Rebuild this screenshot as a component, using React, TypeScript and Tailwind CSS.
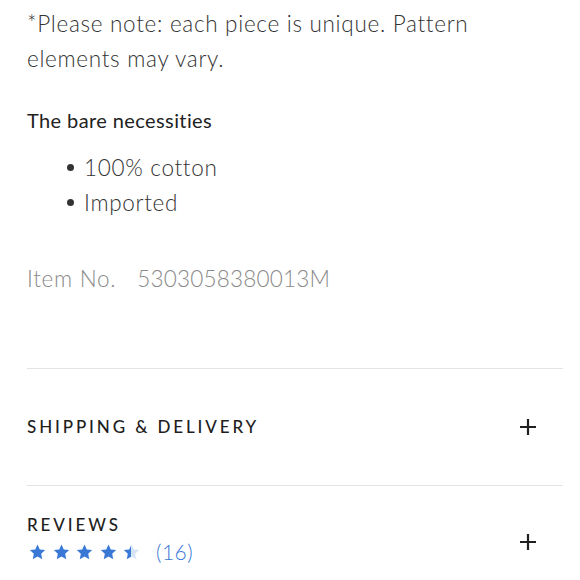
import React from 'react';

const Star: React.FC<{ fill?: number }> = ({ fill = 1 }) => {
  const id = `half-${fill}`;
  return (
    <svg width="17" height="16" viewBox="0 0 24 23" className="shrink-0">
      <defs>
        <linearGradient id={id} x1="0" x2="1" y1="0" y2="0">
          <stop offset={fill} stopColor="#3a78d6" />
          <stop offset={fill} stopColor="#d6e4f7" />
        </linearGradient>
      </defs>
      <path
        d="M12 0.8l3.3 7.1 7.7 0.9-5.7 5.3 1.5 7.7L12 17.9l-6.8 3.9 1.5-7.7L1 8.8l7.7-0.9z"
        fill={`url(#${id})`}
      />
    </svg>
  );
};

const Plus: React.FC = () => (
  <svg width="18" height="18" viewBox="0 0 18 18" className="shrink-0">
    <path d="M9 1v16M1 9h16" stroke="#1f1f1f" strokeWidth="2.2" />
  </svg>
);

export default function App() {
  return (
    <div className="w-[580px] h-[580px] overflow-hidden bg-white pl-[27px] pr-[17px] pt-[6px] font-['Lato',sans-serif] text-[#333]">
      <p className="text-[22.5px] leading-[35px] tracking-[0.7px] font-light text-[#333]">
        *Please note: each piece is unique. Pattern elements may vary.
      </p>

      <h3 className="mt-[30px] text-[20px] leading-[28px] tracking-[0.4px] text-[#222]">The bare necessities</h3>

      <ul className="mt-[16px] pl-[40px] text-[22.5px] leading-[35px] tracking-[0.7px] font-light text-[#333]">
        <li className="flex items-center gap-[10px]">
          <span className="w-[7px] h-[7px] rounded-full bg-[#333]" />
          100% cotton
        </li>
        <li className="flex items-center gap-[10px]">
          <span className="w-[7px] h-[7px] rounded-full bg-[#333]" />
          Imported
        </li>
      </ul>

      <div className="mt-[41px] flex text-[22.5px] leading-[35px] tracking-[0.7px] font-light text-[#8a8a8a]">
        <span>Item No.</span>
        <span className="ml-[21px] tracking-[0.2px]">5303058380013M</span>
      </div>

      <div className="mt-[72px] border-t border-[#e3e3e3]">
        <div className="h-[116px] flex items-center justify-between pr-[26px]">
          <span className="text-[17px] tracking-[0.17em] font-medium text-[#1f1f1f]">
            SHIPPING &amp; DELIVERY
          </span>
          <Plus />
        </div>
      </div>

      <div className="border-t border-[#e3e3e3]">
        <div className="flex items-center justify-between pr-[26px] pt-[27px]">
          <div>
            <div className="text-[17px] leading-[24px] tracking-[0.17em] font-medium text-[#1f1f1f]">
              REVIEWS
            </div>
            <div className="flex items-center mt-[2px]">
              <div className="flex gap-[6.5px] ml-[2px]">
                <Star />
                <Star />
                <Star />
                <Star />
                <Star fill={0.45} />
              </div>
              <span className="ml-[16px] text-[21px] leading-[26px] font-light tracking-[0.5px] text-[#3a78d6]">(16)</span>
            </div>
          </div>
          <div className="mt-[6px]">
            <Plus />
          </div>
        </div>
      </div>
    </div>
  );
}
